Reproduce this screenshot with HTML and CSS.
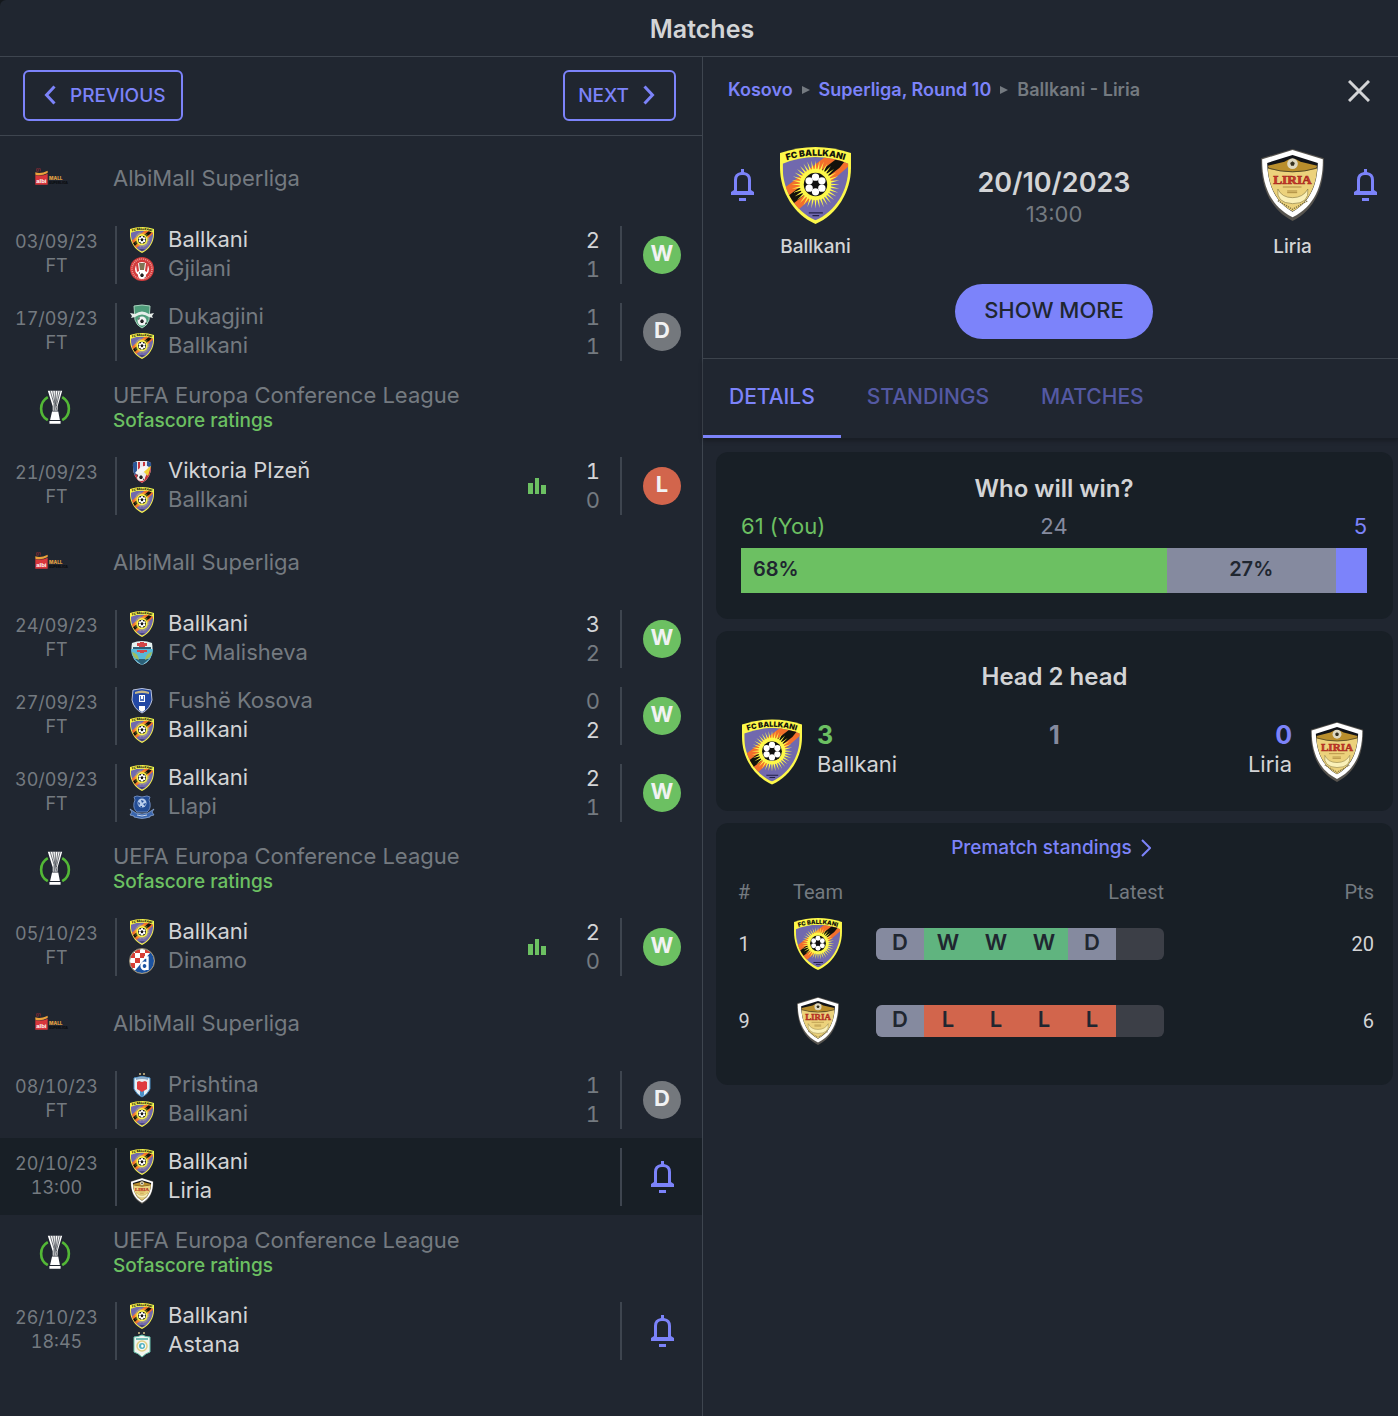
FILE: index.html
```html
<!DOCTYPE html>
<html lang="en">
<head>
<meta charset="utf-8">
<meta name="viewport" content="width=device-width, initial-scale=1">
<title>Matches</title>
<link rel="stylesheet" href="styles.css">
</head>
<body>
<svg class="sprite" aria-hidden="true">
  <defs>
    <path id="ballkani-arc" d="M4 45Q106 7 208 45"/>
    <path id="ray" d="M-4-33L0-72L4-33z"/>
    <g id="rays"><use href="#ray"/><use href="#ray" transform="rotate(10)"/><use href="#ray" transform="rotate(20)"/></g>
    <clipPath id="ballkani-clip"><path d="M8 50Q106 10 204 50V62C204 130 166 192 106 219C46 192 8 130 8 62z"/></clipPath>
    <clipPath id="dinamo-clip"><circle cx="13" cy="13" r="12"/></clipPath>
    <clipPath id="plzen-clip"><path d="M4 5Q13-1 22 5Q23 20 13 25Q3 20 4 5z"/></clipPath>
  </defs>
  <symbol id="ballkani" viewBox="0 0 212 230">
    <path fill="#fdf84a" d="M0 18Q106-18 212 18V62C212 134 170 202 106 230C42 202 0 134 0 62z"/>
    <g clip-path="url(#ballkani-clip)">
      <path fill="#7169ae" d="M0 0h212v230H0z"/>
      <path fill="#f36f2b" d="M-10 140L150 18L235 32L45 196z"/>
      <path fill="#12120c" d="M20 149L170 34L197 38L178 62L38 170z"/>
      <g transform="translate(106 112)" fill="#fdf84a">
        <circle r="47"/>
        <use href="#rays"/><use href="#rays" transform="rotate(30)"/><use href="#rays" transform="rotate(60)"/><use href="#rays" transform="rotate(90)"/><use href="#rays" transform="rotate(120)"/><use href="#rays" transform="rotate(150)"/><use href="#rays" transform="rotate(180)"/><use href="#rays" transform="rotate(210)"/><use href="#rays" transform="rotate(240)"/><use href="#rays" transform="rotate(270)"/><use href="#rays" transform="rotate(300)"/><use href="#rays" transform="rotate(330)"/>
      </g>
    </g>
    <circle cx="106" cy="112" r="35" fill="#111"/>
    <g fill="#fff"><circle cx="106" cy="90" r="11"/><circle cx="125" cy="101" r="11"/><circle cx="125" cy="123" r="11"/><circle cx="106" cy="134" r="11"/><circle cx="87" cy="123" r="11"/><circle cx="87" cy="101" r="11"/></g>
    <path fill="#222048" d="M86 195h42v4H86zM97 203h20v4H97z"/>
    <text class="crest-arc"><textPath href="#ballkani-arc" startOffset="50%">FC BALLKANI</textPath></text>
  </symbol>
  <symbol id="liria" viewBox="0 0 188 216">
    <path fill="#57544f" d="M94 0L188 28C190 110 164 180 94 216C24 180-2 110 0 28z"/>
    <path fill="#fff" d="M94 3L185 31C186 108 160 172 94 205C28 172 2 108 3 31z"/>
    <path fill="#111318" d="M94 18L170 42C168 106 148 158 94 188C40 158 20 106 18 42z"/>
    <path fill="#ecd27c" d="M20 56Q94 80 168 56C166 108 144 160 94 187C44 160 22 108 20 56z"/>
    <path fill="#b98e2c" d="M20 50L70 38Q94 20 118 38L168 50L164 60Q94 76 24 60z"/>
    <circle cx="94" cy="44" r="16" fill="#ddd8c2"/><path fill="#34301f" d="M94 37l7 5-3 8h-8l-3-8z"/>
    <path d="M20 57Q94 80 168 57" fill="none" stroke="#574c29" stroke-width="3"/>
    <path fill="#faf0b8" stroke="#8b7c43" stroke-width="2" d="M50 120Q62 146 94 146Q126 146 140 120Q146 164 94 164Q44 162 50 120z"/>
    <path d="M65 114h56M78 126h30M78 131h30" stroke="#ae8c42" stroke-width="3"/>
    <path d="M50 155L94 181L140 155" fill="none" stroke="#7e6f3d" stroke-width="4" stroke-dasharray="4 3"/>
    <text class="crest-liria" x="94" y="105">LIRIA</text>
  </symbol>
  <symbol id="gjilani" viewBox="0 0 26 26">
    <circle cx="13" cy="13" r="12" fill="#d13a3b"/><circle cx="13" cy="13" r="10" fill="none" stroke="#ee9b98" stroke-width="1.6" stroke-dasharray="1 1"/>
    <circle cx="13" cy="13" r="7" fill="#fff"/><path fill="#7f7455" d="M10 7h6l-1 7h-4z"/><path fill="#d13a3b" d="M7 9l2-2 1 8-2 1zM19 9l-2-2-1 8 2 1z"/>
    <circle cx="13" cy="19" r="4" fill="#fff"/><path fill="#222" d="M13 17l2 2-1 2h-2l-1-2zM10 17l1-1v2zM15 22l1-1h1z"/>
  </symbol>
  <symbol id="dukagjini" viewBox="0 0 26 26">
    <path fill="#4e9c7a" stroke="#a9d2bd" d="M5 2Q13 0 21 2L20 16Q18 22 13 24Q8 22 6 16z"/>
    <path fill="#e7eeea" d="M1 9l5 1q7-5 14 0l5-1-2 3 1 2-4-1q-7-5-14 0l-4 1 1-2z"/>
    <circle cx="13" cy="17" r="4.500" fill="#f3f3f3"/><path fill="#222" d="M13 15l2 2-1 2h-2l-1-2zM9 15l2-2-1 3zM16 20l1-2 1 2zM10 20l2 1z"/>
  </symbol>
  <symbol id="plzen" viewBox="0 0 26 26">
    <g clip-path="url(#plzen-clip)"><path fill="#e5e7ed" d="M0 0h26v26H0z"/><path fill="#2b5798" d="M4 4h4v14H4zM18 3h4v7h-4z"/><path fill="#c7353c" d="M9 4h2v9H9zM14 4h2v6h-2zM4 17l6-1 6 9H4zM21 9h3v15H14z"/><path fill="#f2d236" d="M13 12L22 8L19 18z"/><path fill="#f6f6f6" d="M6 15Q14 5 20 9Q16 14 9 17z"/></g>
    <circle cx="12" cy="19" r="4" fill="#eee"/><path fill="#222" d="M12 17l2 2-1 2h-2l-1-2zM8 18l1-2v3zM14 22l1-2v2zM8 2h10v1H8z"/>
  </symbol>
  <symbol id="malisheva" viewBox="0 0 26 26">
    <path fill="#e5f1f0" d="M3 3Q13-1 23 3Q26 20 13 25Q0 20 3 3z"/><path fill="#59b8d8" d="M2 9h22Q24 20 13 25Q2 20 2 9z"/><path fill="#d34546" d="M8 3h3v-1h4v1h3v3h-2v2h-6V6H8zM8 10h10v2h-3v1h-4v-1H8z"/><path fill="#2b5f77" d="M4 7h18v2H4zM6 19h14l-7 6z"/><path fill="#a2bd5b" d="M3 12q6 1 7 8-6-2-7-8zM23 12q-6 1-7 8 6-2 7-8z"/>
  </symbol>
  <symbol id="kosova" viewBox="0 0 26 26">
    <path fill="#2348a4" stroke="#bcc4da" d="M4 2Q13-1 22 2L23 12Q21 21 13 25Q5 21 3 12z"/><path fill="#c7b889" d="M6 4Q13 1 20 4V6Q13 4 6 6z"/><path fill="#fff" d="M10 7h6v7h-6zM10 18h6v4l-3 2-3-2z"/><path fill="#5273bb" d="M11 8h1v3h2V8h1v5h-4z"/>
  </symbol>
  <symbol id="llapi" viewBox="0 0 26 26">
    <path fill="#234c94" stroke="#6b88bb" d="M5 3l3-1 5 1 5-1 3 1q-2 3 0 6 1 6-3 9H8Q4 15 5 9 7 6 5 3z"/><circle cx="13" cy="9" r="4.500" fill="#b8cdec"/><path fill="#1e4a98" d="M12 6l3 1-2 2zM9 8l2 1-1 3zM14 10l3-1-1 3zM11 12h2v2z"/><path fill="#3965ad" stroke="#8ca6d1" stroke-width=".8" d="M1 15l6 4q6 2 12 0l6-4-2 3 2 3-4 1v1q-8 3-16 0v-1l-4-1 2-3z"/><path d="M8 21q5 2 10 0" stroke="#cad6eb" fill="none"/>
  </symbol>
  <symbol id="dinamo" viewBox="0 0 26 26">
    <g clip-path="url(#dinamo-clip)"><path fill="#fff" d="M0 0h26v26H0z"/><path fill="#d63e34" d="M1 5h5v5H1zM6 0h5v5H6zM11 5h5v5h-5zM16 0h5v5h-5zM6 10h5v5H6zM1 15h5v5H1z"/><path fill="#1b52a0" d="M26 0v26H3L21 5z"/></g>
    <circle cx="13" cy="13" r="12.500" fill="none" stroke="#a59a80"/><path fill="none" stroke="#fff" stroke-width="2.400" d="M15 9.500h3.500V22M18.500 18.500a3 3.200 0 1 1 0-1"/>
  </symbol>
  <symbol id="prishtina" viewBox="0 0 26 26">
    <path fill="#a89a74" d="M10 1h2v2h-2zM14 1h2v2h-2z"/><path fill="#e7f0f5" stroke="#4b90c8" d="M5 6Q13 3 21 6V17Q18 23 13 25Q8 23 5 17z"/><path fill="#4b90c8" d="M11 18h4v5l-2 2-2-2z"/><path fill="#df3b3f" d="M8 10l2-1 3 1 3-1 2 1v7l-5 3-5-3z"/><path fill="#8aa9c6" d="M7 6q6-2 12 0v2q-6-2-12 0z"/>
  </symbol>
  <symbol id="astana" viewBox="0 0 26 26">
    <path fill="#a89a74" d="M9 0h2v2H9zM14 0h2v2h-2z"/><path fill="#f2f6f0" stroke="#69c4ad" d="M5 5q4 0 8-2 4 2 8 2v15q-4 1-8 5-4-4-8-5z"/><path d="M7 7h12" stroke="#4aa8a3" stroke-width="1.500"/><circle cx="13" cy="14" r="5" fill="none" stroke="#dfcf84" stroke-width="1.500"/><circle cx="13" cy="14" r="3" fill="#4fb1c0"/><path fill="#fff" d="M13 12l2 2-2 2-1-2z"/>
  </symbol>
  <symbol id="uecl" viewBox="0 0 98 104">
    <g fill="none" stroke="#53b836" stroke-width="8"><path d="M27 20A41 41 0 0 0 27 91M71 20A41 41 0 0 1 71 91"/></g>
    <path fill="#fff" d="M27 1h44L57 48v14H42V48z"/><path d="M34 0l12 40v22M42 0l7 40v22M50 0v38l5 24M58 0l-6 40M65 0L53 48" fill="none" stroke="#202630" stroke-width="2"/><path fill="#fff" d="M40 64h19l5 26H34zM32 93h34v9H32z"/>
  </symbol>
  <symbol id="albi" viewBox="0 0 120 54">
    <path fill="#d8363b" d="M1 21Q20 26 38 17V50H1z"/><path fill="#eda23b" d="M1 13Q18 18 38 8V15Q18 25 1 20z"/><path fill="none" stroke="#952d35" stroke-width="2" d="M5 2h5v8H5zM11 2h5v8"/>
    <text class="albi-word" x="19" y="45">albi</text><text class="albi-mall" x="42" y="36">MALL</text><text class="albi-super" x="42" y="49">SUPERLIGA</text>
  </symbol>
  <symbol id="bell" viewBox="0 0 23 32"><path fill="currentColor" fill-rule="evenodd" d="M10 0h3v3q7 1 7 8v10l3 2v3H0v-3l3-2V11q0-7 7-8zM6 22V11q0-5 5-5h1q5 0 5 5v11zM8 29h7v3H8z"/></symbol>
  <symbol id="stats" viewBox="0 0 18 16"><path fill="currentColor" d="M0 5h5v11H0zM7 0h4v16H7zM13 7h5v9h-5z"/></symbol>
</svg>

<div class="app">
  <header class="titlebar"><h1>Matches</h1></header>
  <main class="columns">
    <section class="fixtures" aria-label="Fixtures">
      <nav class="pager">
        <button class="page-btn" type="button"><svg class="chevron" viewBox="0 0 12 20"><path d="M10.500 1.500L2.500 10l8 8.500"/></svg>PREVIOUS</button>
        <button class="page-btn next" type="button">NEXT<svg class="chevron" viewBox="0 0 12 20"><path d="M1.500 1.500l8 8.500-8 8.500"/></svg></button>
      </nav>
      <ul class="list">
        <li class="league"><svg class="league-albi"><use href="#albi"/></svg><div>AlbiMall Superliga</div></li>
        <li class="match"><div class="when">03/09/23<br>FT</div>
          <div class="teams"><div class="side win"><svg><use href="#ballkani"/></svg><span>Ballkani</span><b>2</b></div><div class="side"><svg><use href="#gjilani"/></svg><span>Gjilani</span><b>1</b></div></div>
          <span class="badge w">W</span></li>
        <li class="match"><div class="when">17/09/23<br>FT</div>
          <div class="teams"><div class="side"><svg><use href="#dukagjini"/></svg><span>Dukagjini</span><b>1</b></div><div class="side"><svg><use href="#ballkani"/></svg><span>Ballkani</span><b>1</b></div></div>
          <span class="badge d">D</span></li>
        <li class="league rated"><svg class="league-uecl"><use href="#uecl"/></svg><div>UEFA Europa Conference League<small>Sofascore ratings</small></div></li>
        <li class="match"><div class="when">21/09/23<br>FT</div>
          <div class="teams"><div class="side win"><svg><use href="#plzen"/></svg><span>Viktoria Plzeň</span><b>1</b></div><div class="side"><svg><use href="#ballkani"/></svg><span>Ballkani</span><b>0</b></div><svg class="stats"><use href="#stats"/></svg></div>
          <span class="badge l">L</span></li>
        <li class="league"><svg class="league-albi"><use href="#albi"/></svg><div>AlbiMall Superliga</div></li>
        <li class="match"><div class="when">24/09/23<br>FT</div>
          <div class="teams"><div class="side win"><svg><use href="#ballkani"/></svg><span>Ballkani</span><b>3</b></div><div class="side"><svg><use href="#malisheva"/></svg><span>FC Malisheva</span><b>2</b></div></div>
          <span class="badge w">W</span></li>
        <li class="match"><div class="when">27/09/23<br>FT</div>
          <div class="teams"><div class="side"><svg><use href="#kosova"/></svg><span>Fushë Kosova</span><b>0</b></div><div class="side win"><svg><use href="#ballkani"/></svg><span>Ballkani</span><b>2</b></div></div>
          <span class="badge w">W</span></li>
        <li class="match"><div class="when">30/09/23<br>FT</div>
          <div class="teams"><div class="side win"><svg><use href="#ballkani"/></svg><span>Ballkani</span><b>2</b></div><div class="side"><svg><use href="#llapi"/></svg><span>Llapi</span><b>1</b></div></div>
          <span class="badge w">W</span></li>
        <li class="league rated"><svg class="league-uecl"><use href="#uecl"/></svg><div>UEFA Europa Conference League<small>Sofascore ratings</small></div></li>
        <li class="match"><div class="when">05/10/23<br>FT</div>
          <div class="teams"><div class="side win"><svg><use href="#ballkani"/></svg><span>Ballkani</span><b>2</b></div><div class="side"><svg><use href="#dinamo"/></svg><span>Dinamo</span><b>0</b></div><svg class="stats"><use href="#stats"/></svg></div>
          <span class="badge w">W</span></li>
        <li class="league"><svg class="league-albi"><use href="#albi"/></svg><div>AlbiMall Superliga</div></li>
        <li class="match"><div class="when">08/10/23<br>FT</div>
          <div class="teams"><div class="side"><svg><use href="#prishtina"/></svg><span>Prishtina</span><b>1</b></div><div class="side"><svg><use href="#ballkani"/></svg><span>Ballkani</span><b>1</b></div></div>
          <span class="badge d">D</span></li>
        <li class="match selected"><div class="when">20/10/23<br>13:00</div>
          <div class="teams"><div class="side win"><svg><use href="#ballkani"/></svg><span>Ballkani</span></div><div class="side win"><svg><use href="#liria"/></svg><span>Liria</span></div></div>
          <button class="bell" type="button" aria-label="Notify me"><svg><use href="#bell"/></svg></button></li>
        <li class="league rated"><svg class="league-uecl"><use href="#uecl"/></svg><div>UEFA Europa Conference League<small>Sofascore ratings</small></div></li>
        <li class="match"><div class="when">26/10/23<br>18:45</div>
          <div class="teams"><div class="side win"><svg><use href="#ballkani"/></svg><span>Ballkani</span></div><div class="side win"><svg><use href="#astana"/></svg><span>Astana</span></div></div>
          <button class="bell" type="button" aria-label="Notify me"><svg><use href="#bell"/></svg></button></li>
      </ul>
    </section>

    <section class="detail" aria-label="Match detail">
      <div class="summary">
        <div class="crumbs">
          <nav><a href="#">Kosovo</a><i></i><a href="#">Superliga, Round 10</a><i></i><span>Ballkani - Liria</span></nav>
          <button class="close" type="button" aria-label="Close"><svg viewBox="0 0 22 22"><path d="M1 1l20 20M21 1L1 21"/></svg></button>
        </div>
        <div class="versus">
          <button class="bell" type="button" aria-label="Notify Ballkani"><svg><use href="#bell"/></svg></button>
          <div class="club"><svg><use href="#ballkani"/></svg>Ballkani</div>
          <div class="kickoff"><strong>20/10/2023</strong><span>13:00</span></div>
          <div class="club small"><svg><use href="#liria"/></svg>Liria</div>
          <button class="bell" type="button" aria-label="Notify Liria"><svg><use href="#bell"/></svg></button>
        </div>
        <button class="show-more" type="button">SHOW MORE</button>
      </div>
      <nav class="tabs"><a class="active" href="#">DETAILS</a><a href="#">STANDINGS</a><a href="#">MATCHES</a></nav>
      <div class="cards">
        <article class="card vote">
          <h2>Who will win?</h2>
          <div class="counts"><span class="home">61 (You)</span><span class="draw">24</span><span class="away">5</span></div>
          <div class="bar"><span class="home" style="width:68%">68%</span><span class="draw" style="width:27%">27%</span><span class="away" style="width:5%"></span></div>
        </article>
        <article class="card h2h">
          <h2>Head 2 head</h2>
          <div class="duel">
            <div class="duelist"><svg><use href="#ballkani"/></svg><div><strong class="home">3</strong>Ballkani</div></div>
            <strong class="draw">1</strong>
            <div class="duelist right"><div><strong class="away">0</strong>Liria</div><svg><use href="#liria"/></svg></div>
          </div>
        </article>
        <article class="card standings">
          <a class="more" href="#">Prematch standings<svg viewBox="0 0 10 18"><path d="M1 1l8 8-8 8"/></svg></a>
          <table>
            <thead><tr><th class="pos">#</th><th class="team">Team</th><th class="latest">Latest</th><th class="pts">Pts</th></tr></thead>
            <tbody>
              <tr><td class="pos">1</td><td class="team"><svg><use href="#ballkani"/></svg></td><td><div class="form"><span class="d">D</span><span class="w">W</span><span class="w">W</span><span class="w">W</span><span class="d">D</span><span></span></div></td><td class="pts">20</td></tr>
              <tr><td class="pos">9</td><td class="team"><svg class="small"><use href="#liria"/></svg></td><td><div class="form"><span class="d">D</span><span class="l">L</span><span class="l">L</span><span class="l">L</span><span class="l">L</span><span></span></div></td><td class="pts">6</td></tr>
            </tbody>
          </table>
        </article>
      </div>
    </section>
  </main>
</div>
</body>
</html>
```

FILE: styles.css
```css
:root {
  --bg: #202630;
  --card: #181f26;
  --line: #3e454f;
  --text: #d3d4d6;
  --muted: #747a80;
  --accent: #7c83fa;
  --green: #6cc062;
  --grey: #858a9f;
  --red: #d2654c;
}

* { box-sizing: border-box; }

body {
  margin: 0;
  background: #14181c;
  color: var(--text);
  font: 400 22px/29px Inter, "Liberation Sans", sans-serif;
}

h1, h2, ul { margin: 0; padding: 0; }
ul { list-style: none; }
a { color: var(--accent); text-decoration: none; }
svg { display: block; flex: none; }
button { font: inherit; padding: 0; border: 0; background: none; color: var(--accent); cursor: pointer; }
.sprite { position: absolute; width: 0; height: 0; }

.crest-arc { font: 900 26px Inter, sans-serif; fill: #15150c; text-anchor: middle; }
.crest-liria { font: 900 40px "Liberation Serif", serif; fill: #cf3b2b; stroke: #a52a20; stroke-width: 2px; text-anchor: middle; }
.albi-word { font: 700 18px "Liberation Sans", sans-serif; fill: #fff; text-anchor: middle; }
.albi-mall { font: 900 14px Inter, sans-serif; fill: #d89a43; }
.albi-super { font: 900 10px Inter, sans-serif; fill: #0b0d10; }

.app { min-height: 100vh; display: flex; flex-direction: column; background: var(--bg); border-top-left-radius: 6px; }
.titlebar { height: 57px; padding: 2px 0 0 6px; display: flex; align-items: center; justify-content: center; border-bottom: 1px solid var(--line); }
h1, h2 { font-size: 25px; font-weight: 600; line-height: 32px; text-align: center; }
h2 { font-size: 24px; }
.columns { flex: 1; display: grid; grid-template-columns: minmax(0, 703fr) minmax(0, 695fr); }

/* fixtures list */
.fixtures { border-right: 1px solid var(--line); }
.pager { height: 79px; padding: 0 26px 2px 23px; display: flex; align-items: center; justify-content: space-between; border-bottom: 1px solid var(--line); }
.page-btn { height: 51px; padding: 0 15px 0 19px; display: flex; align-items: center; gap: 14px; border: 2px solid var(--accent); border-radius: 6px; font-size: 19px; font-weight: 500; }
.page-btn.next { padding: 0 19px 0 13px; }
.chevron { width: 12px; height: 20px; fill: none; stroke: currentColor; stroke-width: 3; }
.list { padding: 4px 0 48px; }

.league { height: 76px; display: grid; grid-template-columns: 113px 1fr; align-items: center; color: var(--muted); line-height: 27px; }
.league.rated { height: 77px; padding-bottom: 2px; }
.league small { display: block; color: var(--green); font-size: 19px; font-weight: 500; line-height: 24px; }
.league-uecl { width: 32px; height: 35px; margin-left: 39px; }
.league-albi { width: 40px; height: 18px; margin: 0 0 3px 35px; }

.match { height: 77px; display: grid; grid-template-columns: 115px 1fr 80px; align-items: center; }
.match.selected { background: var(--card); }
.when { padding: 0 2px 1px 0; color: var(--muted); font-size: 18px; line-height: 24px; text-align: center; font-variant-numeric: tabular-nums; }
.teams { position: relative; padding: 0 20px 0 12px; border: solid var(--line); border-width: 0 2px; }
.side { height: 29px; display: flex; align-items: center; gap: 13px; color: var(--muted); }
.side svg { width: 26px; height: 26px; }
.side span { flex: 1; padding-bottom: 2px; }
.side b { font-weight: 400; font-variant-numeric: tabular-nums; }
.side.win { color: var(--text); }
.stats { position: absolute; right: 74px; top: 21px; width: 18px; height: 16px; color: var(--green); }
.badge { width: 38px; height: 38px; margin: auto; border-radius: 50%; color: #f1f2f3; font-weight: 700; line-height: 35px; text-align: center; }
.badge.w { background: var(--green); }
.badge.d { background: #74787d; }
.badge.l { background: var(--red); }
.bell svg { width: 23px; height: 32px; }
.match .bell { margin: auto; }

/* match summary */
.summary { padding: 20px 21px 19px 28px; border-bottom: 1px solid var(--line); }
.crumbs { display: flex; justify-content: space-between; font-size: 18px; font-weight: 600; line-height: 24px; color: var(--muted); }
.crumbs nav { margin-left: -3px; display: flex; align-items: center; }
.crumbs i { margin: 0 9px; border: solid transparent; border-width: 4px 0 4px 8px; border-left-color: var(--muted); }
.close { padding: 3px 7px 0; }
.close svg { width: 22px; height: 22px; fill: none; stroke: var(--text); stroke-width: 3; }
.versus { margin-top: 45px; display: flex; align-items: flex-start; gap: 21px; }
.versus .bell { margin-top: 22px; }
.club { width: 81px; display: flex; flex-direction: column; align-items: center; font-size: 19px; font-weight: 500; }
.club svg { width: 71px; height: 77px; margin-bottom: 8px; }
.club.small svg { height: 72px; margin: 2px 0 11px; }
.kickoff { flex: 1; padding-top: 18px; text-align: center; color: var(--muted); }
.kickoff strong { display: block; color: var(--text); font-size: 27px; font-weight: 600; line-height: 35px; }
.show-more { display: block; height: 55px; margin: 23px auto 0; padding: 0 29px 2px; border-radius: 28px; background: var(--accent); color: #202630; font-weight: 500; }

.tabs { height: 80px; display: flex; border-bottom: 1px solid #191e26; box-shadow: 0 2px 4px #0004; }
.tabs a { padding: 0 26px 1px; display: flex; align-items: center; border-bottom: 3px solid transparent; color: #5459a3; font-weight: 500; font-size: 21px; }
.tabs a.active { color: var(--accent); border-color: var(--accent); }

/* cards */
.cards { padding: 13px 5px 24px 13px; display: grid; gap: 12px; }
.card { border-radius: 12px; background: var(--card); }
.vote { padding: 21px 26px 26px 25px; }
.counts { margin: 7px 0; display: grid; grid-template-columns: 1fr auto 1fr; }
.home { color: var(--green); }
.draw { color: var(--grey); }
.away { color: var(--accent); }
.counts .away { text-align: right; }
.bar { height: 45px; display: flex; font-size: 20px; line-height: 43px; font-weight: 600; text-align: center; }
.bar span { color: #202630; background: var(--grey); }
.bar .home { padding-left: 12px; text-align: left; background: var(--green); }
.bar .away { background: var(--accent); }
.h2h { padding: 30px 26px 26px; }
.duel { margin-top: 26px; display: grid; grid-template-columns: 1fr auto 1fr; }
.duel strong { font-size: 25px; font-weight: 700; line-height: 32px; }
.duelist { display: flex; gap: 15px; line-height: 27px; }
.duelist strong { display: block; }
.duelist svg { width: 60px; height: 66px; }
.duelist.right { justify-content: flex-end; text-align: right; }
.duelist.right svg { height: 60px; margin-top: 3px; }
.standings { padding: 10px 0 26px; }
.more { display: flex; justify-content: center; align-items: center; gap: 9px; font-size: 19px; font-weight: 500; padding-right: 7px; }
.more svg { width: 10px; height: 18px; fill: none; stroke: currentColor; stroke-width: 2; }
table { width: 100%; margin-top: 17px; table-layout: fixed; border-collapse: collapse; font: 400 20px/26px Roboto, sans-serif; }
th, td { padding: 0; }
th { height: 26px; color: var(--muted); font-weight: 400; }
td { height: 77px; }
.pos { width: 56px; text-align: center; }
.team { width: 92px; text-align: center; }
th.latest { width: 300px; text-align: right; }
.pts { padding-right: 19px; text-align: right; }
.team svg { width: 48px; height: 52px; margin: auto; }
.team svg.small { height: 48px; }
.form { width: 288px; height: 32px; margin-left: auto; display: grid; grid-template-columns: repeat(6, 1fr); overflow: hidden; border-radius: 6px; background: #3c3f47; color: #202630; font: 600 22px/29px Inter, sans-serif; text-align: center; }
.form .d { background: var(--grey); }
.form .w { background: #60b47f; }
.form .l { background: var(--red); }
```
